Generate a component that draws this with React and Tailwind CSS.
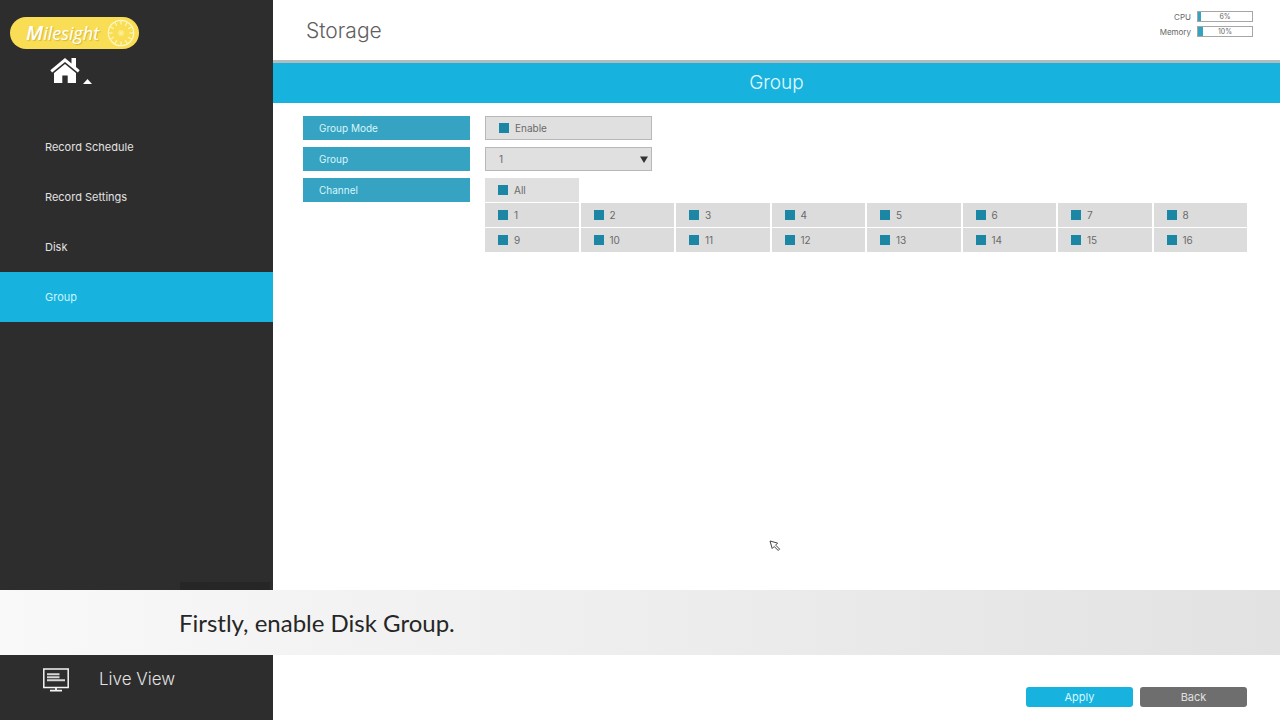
import { useState } from "react";

const menuItems = ["Record Schedule", "Record Settings", "Disk", "Group"];
const channels = Array.from({ length: 16 }, (_, i) => i + 1);

function Logo() {
  const ticks = Array.from({ length: 12 }, (_, i) => i * 30);
  return (
    <div className="flex h-8 w-[129px] items-center justify-between rounded-full bg-[#f9dd54] pr-1 pl-4">
      <span
        className="font-['Open_Sans',sans-serif] text-lg leading-8 italic text-white"
        style={{ textShadow: "1px 1px 1px #d4b740" }}
      >
        <span className="text-xl font-semibold">M</span>ilesight
      </span>
      <svg width="28" height="28" viewBox="0 0 28 28" fill="none" stroke="#fff8c4">
        <circle cx="14" cy="14" r="12.7" strokeWidth="1.2" />
        {ticks.map((deg) => (
          <path key={deg} d="M14 2v3.6" strokeWidth="1.1" transform={`rotate(${deg} 14 14)`} />
        ))}
        <circle cx="14" cy="14" r="2" fill="#fff2a0" stroke="#fcea85" strokeWidth="2" />
      </svg>
    </div>
  );
}

function Sidebar({ active, onSelect }) {
  return (
    <aside className="flex w-[273px] shrink-0 flex-col bg-[#2d2d2d] text-[#e2e2e2]">
      <div className="h-[122px] px-2.5 pt-[17px]">
        <Logo />
        <button className="mt-2 ml-10 flex items-end gap-0.5" aria-label="Home">
          <svg width="31" height="27" viewBox="0 0 31 27" fill="#fff">
            <path d="M15 1 L0.3 13.2 L2.2 15.6 L15 5 L27.8 15.6 L29.7 13.2 L26 10 V1 H21.5 V6.4 Z" />
            <path d="M15 7 L4 16 V26 H12.3 V18.5 H17.7 V26 H26 V16 Z" />
          </svg>
          <svg width="9" height="5" viewBox="0 0 9 5" fill="#fff">
            <path d="M4.5 0 L9 5 H0 Z" />
          </svg>
        </button>
      </div>
      <nav className="flex flex-1 flex-col">
        {menuItems.map((item) => (
          <button
            key={item}
            onClick={() => onSelect(item)}
            className={`h-[50px] pl-[45px] text-left text-[11px] ${
              active === item ? "bg-[#17b2de] text-[#c8f6ff]" : ""
            }`}
          >
            {item}
          </button>
        ))}
      </nav>
      <button className="mb-6 flex h-8 items-center gap-[30px] pl-[43px] text-[17px] font-light">
        <svg width="26" height="24" viewBox="0 0 26 24" fill="none" stroke="#f4f4f4">
          <rect x="0.8" y="1" width="24.4" height="18.5" strokeWidth="1.5" />
          <path d="M4 6.3h12.5M4 9.3h12.5M4 12.3h18" strokeWidth="2" stroke="#d8d8d8" />
          <path d="M13 19.5v3M7 22.7h12" strokeWidth="1.8" />
        </svg>
        Live View
      </button>
    </aside>
  );
}

function Meter({ label, value }) {
  return (
    <div className="flex h-[11px] items-center justify-end gap-1.5 text-[8px] text-[#686868]">
      <span>{label}</span>
      <div className="relative h-[11px] w-14 border border-[#a6a6a6]">
        <div className="h-full bg-[#35a3c0]" style={{ width: `${value}%` }} />
        <span className="absolute inset-0 text-center text-[7px] leading-[9px]">{value}%</span>
      </div>
    </div>
  );
}

function Check({ id, label, checked, onChange, className }) {
  return (
    <label className={`flex h-6 items-center gap-1.5 text-[10px] text-[#6a6a6a] ${className}`}>
      <input
        id={id}
        type="checkbox"
        checked={checked}
        onChange={onChange}
        className="size-2.5 appearance-none border border-[#1b87a4] bg-white checked:bg-[#1b87a4]"
      />
      {label}
    </label>
  );
}

function FieldLabel({ htmlFor, children }) {
  return (
    <label
      htmlFor={htmlFor}
      className="flex h-6 w-[167px] shrink-0 items-center bg-[#37a3c2] pl-4 text-[10px] text-[#d6f6fc]"
    >
      {children}
    </label>
  );
}

export default function App() {
  const [active, setActive] = useState("Group");
  const [enabled, setEnabled] = useState(true);
  const [group, setGroup] = useState("1");
  const [selected, setSelected] = useState(channels);

  const allSelected = selected.length === channels.length;

  const toggleChannel = (ch) => {
    setSelected(
      selected.includes(ch) ? selected.filter((c) => c !== ch) : [...selected, ch]
    );
  };

  return (
    <div className="relative flex min-h-screen bg-white font-['Inter',sans-serif]">
      <Sidebar active={active} onSelect={setActive} />

      <main className="flex min-w-0 flex-1 flex-col">
        {/* Header */}
        <header className="flex h-[63px] items-start justify-between border-b-3 border-[#b4bcbe] pr-[27px] pl-[33px]">
          <h1 className="pt-4 text-[21px] leading-[30px] font-light text-[#606060]">Storage</h1>
          <div className="flex flex-col gap-1 pt-[11px]">
            <Meter label="CPU" value={6} />
            <Meter label="Memory" value={10} />
          </div>
        </header>
        <h2 className="bg-[#17b2de] text-center text-[19px] leading-10 font-light text-[#e0faff]">
          Group
        </h2>

        {/* Settings */}
        <section className="flex flex-1 flex-col gap-[7px] pt-[13px] pr-[33px] pl-[30px]">
          <div className="flex gap-[15px]">
            <FieldLabel htmlFor="mode">Group Mode</FieldLabel>
            <Check
              id="mode"
              label="Enable"
              checked={enabled}
              onChange={() => setEnabled(!enabled)}
              className="w-[167px] border border-[#b8b8b8] bg-[#e0e0e0] pl-[13px]"
            />
          </div>
          <div className="flex gap-[15px]">
            <FieldLabel htmlFor="group">Group</FieldLabel>
            <div className="relative w-[167px]">
              <select
                id="group"
                value={group}
                onChange={(e) => setGroup(e.target.value)}
                className="block h-6 w-full appearance-none border border-[#b8b8b8] bg-[#e0e0e0] pl-[13px] text-[10px] text-[#6a6a6a]"
              >
                {channels.map((n) => (
                  <option key={n}>{n}</option>
                ))}
              </select>
              <svg
                className="pointer-events-none absolute top-[9px] right-1"
                width="8"
                height="7"
                viewBox="0 0 8 7"
                fill="#333"
              >
                <path d="M0 0.5h8L4 7z" />
              </svg>
            </div>
          </div>
          <div className="flex items-start gap-[15px]">
            <FieldLabel htmlFor="all-channels">Channel</FieldLabel>
            <div className="grid flex-1 grid-cols-8 gap-x-0.5 gap-y-px">
              <Check
                id="all-channels"
                label="All"
                checked={allSelected}
                onChange={() => setSelected(allSelected ? [] : channels)}
                className="bg-[#e0e0e0] pl-[13px]"
              />
              <div className="col-span-7" />
              {channels.map((ch) => (
                <Check
                  key={ch}
                  label={ch}
                  checked={selected.includes(ch)}
                  onChange={() => toggleChannel(ch)}
                  className="bg-[#dcdcdc] pl-[13px]"
                />
              ))}
            </div>
          </div>
        </section>

        {/* Actions */}
        <footer className="flex justify-end gap-[7px] pr-[33px] pb-[13px] text-[11px]">
          <button className="h-5 w-[107px] rounded-[3px] bg-[#17b2de] text-[#d8f8ff]">Apply</button>
          <button className="h-5 w-[107px] rounded-[3px] bg-[#6e6e6e] text-[#e0e0e0]">Back</button>
        </footer>
      </main>

      {/* Subtitle */}
      <div className="absolute inset-x-0 bottom-[65px]">
        <div className="ml-[180px] h-2 w-[90px] bg-[#262626]" />
        <p className="bg-linear-to-r from-[#f9f9f9] to-[#e2e2e2] pl-[179px] font-['Lato',sans-serif] text-2xl leading-[65px] text-[#262626]">
          Firstly, enable Disk Group.
        </p>
      </div>

      {/* Mouse pointer */}
      <svg
        className="pointer-events-none absolute top-[540px] left-[769px]"
        width="12"
        height="12"
        viewBox="0 0 12 12"
        fill="#fff"
        stroke="#444"
      >
        <path d="M1 1l2.2 7.5 2-2 4 4 1.4-1.4-4-4 2-2z" />
      </svg>
    </div>
  );
}
